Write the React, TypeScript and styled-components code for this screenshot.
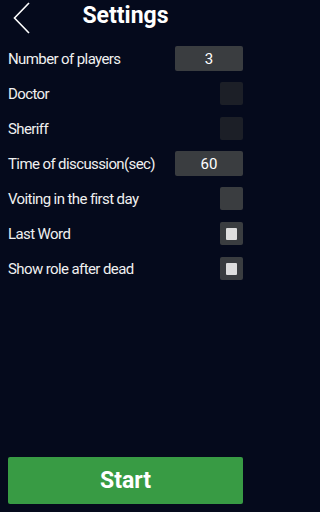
import styled, { createGlobalStyle } from 'styled-components';

const GlobalStyle = createGlobalStyle`
  html, body {
    margin: 0;
    padding: 0;
    background: #050a1c;
  }
  body {
    font-family: Roboto, "Liberation Sans", Arial, sans-serif;
    color: #f2f2f2;
  }
`;

const Screen = styled.div`
  width: 250px;
  height: 512px;
  display: flex;
  flex-direction: column;
  box-sizing: border-box;
  padding: 0 7px 8px 8px;
  background: #050a1c;
`;

const Header = styled.div`
  height: 41px;
  display: grid;
  grid-template-columns: 34px 1fr 34px;
  align-items: start;
`;

const BackButton = styled.button`
  background: none;
  border: none;
  padding: 0;
  height: 36px;
  width: 30px;
  display: flex;
  align-items: flex-start;
  cursor: pointer;
  svg {
    display: block;
  }
`;

const Title = styled.h1`
  margin: 0;
  padding-top: 2px;
  line-height: 28px;
  text-align: center;
  font-size: 23px;
  font-weight: 700;
  color: #ffffff;
`;

const List = styled.div`
  flex: 1;
  display: flex;
  flex-direction: column;
`;

const Row = styled.div`
  height: 35px;
  display: flex;
  align-items: center;
  justify-content: space-between;
`;

const Label = styled.span`
  font-size: 15px;
  letter-spacing: -0.6px;
  color: #f0f0f0;
`;

const NumberBox = styled.div`
  width: 68px;
  height: 25px;
  background: #3a3d40;
  border-radius: 2px;
  display: flex;
  align-items: center;
  justify-content: center;
  font-size: 15px;
  color: #ffffff;
`;

const CheckBox = styled.div<{ $disabled?: boolean }>`
  width: 23px;
  height: 23px;
  border-radius: 2px;
  background: ${(p) => (p.$disabled ? '#1c1f27' : '#3a3d40')};
  display: flex;
  align-items: center;
  justify-content: center;
`;

const Tick = styled.div`
  width: 11px;
  height: 12px;
  background: #dedede;
  border-radius: 1px;
`;

const StartButton = styled.button`
  height: 47px;
  width: 100%;
  border: none;
  border-radius: 2px;
  background: #389b44;
  color: #ffffff;
  font-family: Roboto, "Liberation Sans", Arial, sans-serif;
  font-size: 23px;
  font-weight: 700;
  cursor: pointer;
`;

type Setting =
  | { label: string; kind: 'number'; value: number }
  | { label: string; kind: 'check'; checked: boolean; disabled?: boolean };

const settings: Setting[] = [
  { label: 'Number of players', kind: 'number', value: 3 },
  { label: 'Doctor', kind: 'check', checked: false, disabled: true },
  { label: 'Sheriff', kind: 'check', checked: false, disabled: true },
  { label: 'Time of discussion(sec)', kind: 'number', value: 60 },
  { label: 'Voiting in the first day', kind: 'check', checked: false },
  { label: 'Last Word', kind: 'check', checked: true },
  { label: 'Show role after dead', kind: 'check', checked: true },
];

function App() {
  return (
    <>
      <GlobalStyle />
      <Screen>
        <Header>
          <BackButton aria-label="Back">
            <svg width="30" height="36" viewBox="0 0 30 36">
              <polyline
                points="21,3 6.5,18 21,33"
                fill="none"
                stroke="#ffffff"
                strokeWidth="1.6"
              />
            </svg>
          </BackButton>
          <Title>Settings</Title>
          <span />
        </Header>
        <List>
          {settings.map((s) => (
            <Row key={s.label}>
              <Label>{s.label}</Label>
              {s.kind === 'number' ? (
                <NumberBox>{s.value}</NumberBox>
              ) : (
                <CheckBox $disabled={s.disabled}>{s.checked && <Tick />}</CheckBox>
              )}
            </Row>
          ))}
        </List>
        <StartButton>Start</StartButton>
      </Screen>
    </>
  );
}

export default App;
